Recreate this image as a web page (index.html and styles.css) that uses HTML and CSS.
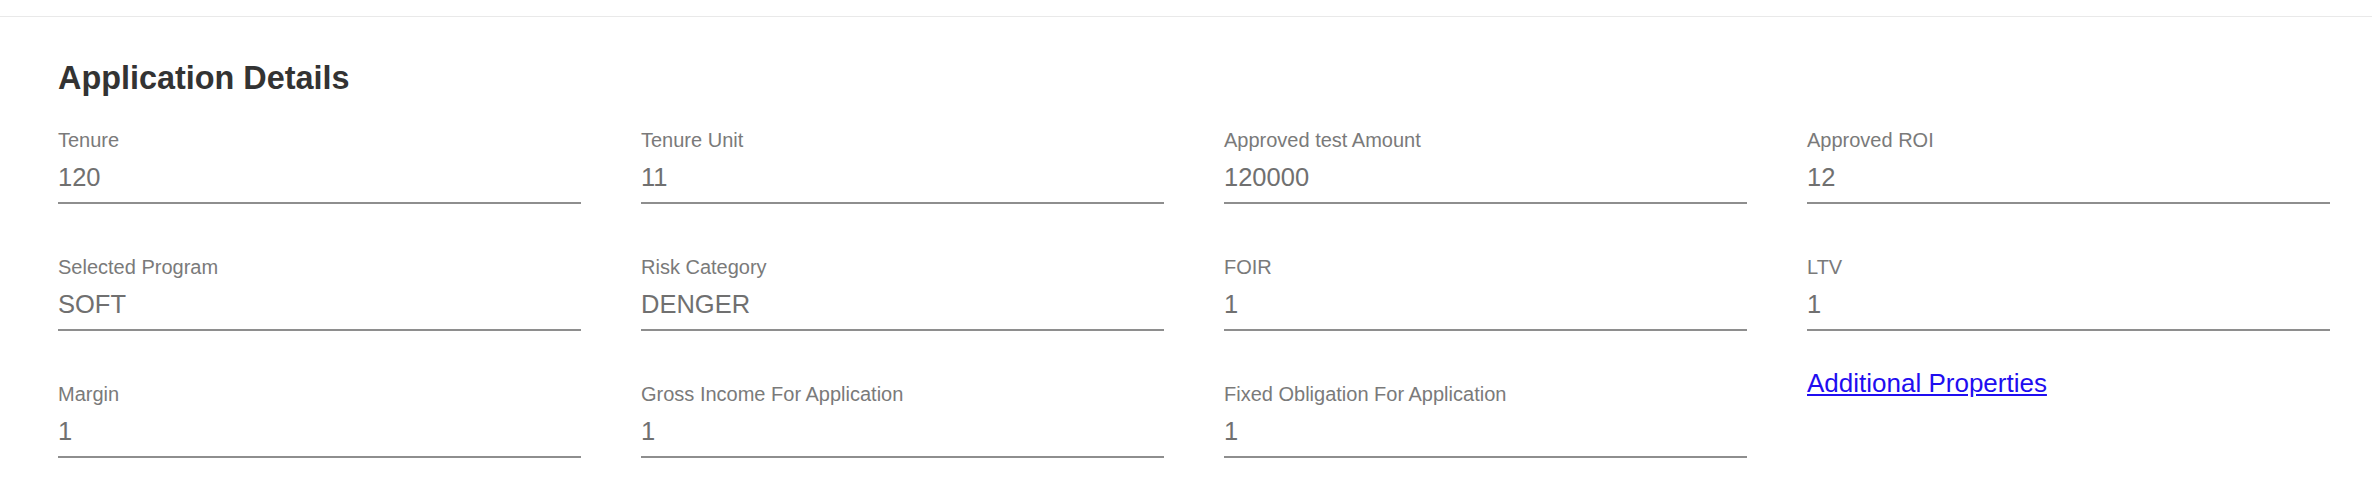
FILE: index.html
```html
<!DOCTYPE html>
<html lang="en">
<head>
<meta charset="utf-8">
<title>Application Details</title>
<link rel="stylesheet" href="styles.css">
</head>
<body>
<div class="topbar"></div>
<section class="details">
  <h2 class="title">Application Details</h2>
  <div class="grid">
    <div class="field"><div class="label">Tenure</div><div class="value">120</div></div>
    <div class="field"><div class="label">Tenure Unit</div><div class="value">11</div></div>
    <div class="field"><div class="label">Approved test Amount</div><div class="value">120000</div></div>
    <div class="field"><div class="label">Approved ROI</div><div class="value">12</div></div>

    <div class="field"><div class="label">Selected Program</div><div class="value">SOFT</div></div>
    <div class="field"><div class="label">Risk Category</div><div class="value">DENGER</div></div>
    <div class="field"><div class="label">FOIR</div><div class="value">1</div></div>
    <div class="field"><div class="label">LTV</div><div class="value">1</div></div>

    <div class="field"><div class="label">Margin</div><div class="value">1</div></div>
    <div class="field"><div class="label">Gross Income For Application</div><div class="value">1</div></div>
    <div class="field"><div class="label">Fixed Obligation For Application</div><div class="value">1</div></div>
    <div class="link-cell"><a class="link" href="#">Additional Properties</a></div>
  </div>
</section>
</body>
</html>
```

FILE: styles.css
```css
html, body {
  margin: 0;
  padding: 0;
  background: #ffffff;
  font-family: "Liberation Sans", Arial, Helvetica, sans-serif;
}

.topbar {
  height: 16px;
  border-bottom: 1px solid #e9e9e9;
}

.details {
  padding: 0 42px 0 58px;
}

.title {
  margin: 41px 0 0 0;
  font-size: 32.4px;
  line-height: 40px;
  font-weight: 700;
  color: #333333;
}

.grid {
  margin-top: 30px;
  display: grid;
  grid-template-columns: repeat(4, 1fr);
  column-gap: 60px;
  row-gap: 51px;
}

.field {
  display: flex;
  flex-direction: column;
  padding-bottom: 9px;
  border-bottom: 2px solid #8e8e8e;
}

.label {
  font-size: 20px;
  line-height: 24px;
  color: #7a7a7a;
}

.value {
  margin-top: 9px;
  font-size: 25.5px;
  line-height: 32px;
  color: #707070;
}

.link-cell {
  align-self: start;
  margin-top: -15px;
}

.link {
  font-size: 26px;
  line-height: 32px;
  color: #1f0df0;
  text-decoration: underline;
}
```
